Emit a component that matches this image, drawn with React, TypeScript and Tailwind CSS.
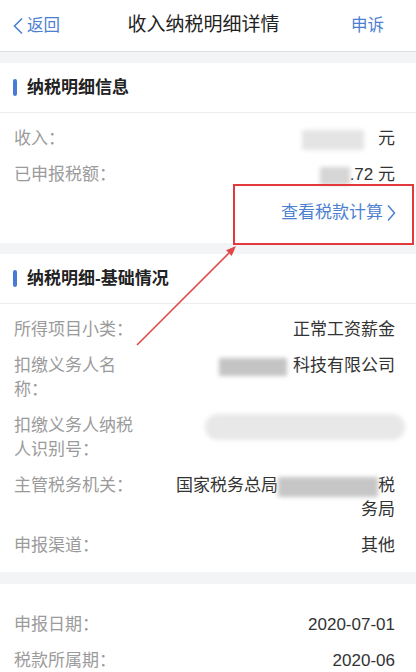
import React from 'react';

const FONT = { fontFamily: '"Liberation Sans", "Noto Sans CJK SC", sans-serif' };

type RowProps = { label: React.ReactNode; children: React.ReactNode };

const Row: React.FC<RowProps> = ({ label, children }) => (
  <div className="flex justify-between pl-[14px] pr-[21px] py-1.5 text-[17px] leading-6">
    <div className="w-[124px] shrink-0 text-[#9b9b9b]">{label}</div>
    <div className="flex-1 text-right text-[#333]">{children}</div>
  </div>
);

const SectionTitle: React.FC<{ title: string }> = ({ title }) => (
  <div className="flex h-[50px] items-center gap-[10px] border-b border-[#ececec] px-[13px]">
    <span className="h-[17px] w-[4px] rounded-full bg-[#4a7ad6]" />
    <span className="text-[17px] font-semibold text-[#222]">{title}</span>
  </div>
);

// blurred-out bits of the screenshot
const Blur: React.FC<{ className: string }> = ({ className }) => (
  <span className={`inline-block align-middle blur-[2px] ${className}`} />
);

const App: React.FC = () => {
  return (
    <div className="relative h-[672px] w-[416px] overflow-hidden bg-white" style={FONT}>
      {/* Header */}
      <header className="flex h-[52px] items-center justify-between border-b border-[#dcdde0] px-[12px]">
        <div className="flex items-center gap-[3px] text-[16.5px] text-[#4d7fd1]">
          <svg width="12" height="18" viewBox="0 0 12 18" fill="none">
            <path d="M10 1.5 L2.5 9 L10 16.5" stroke="#4d7fd1" strokeWidth="1.6" />
          </svg>
          <span>返回</span>
        </div>
        <h1 className="pr-[4px] text-[19px] text-[#222]">收入纳税明细详情</h1>
        <div className="pr-[20px] text-[16.5px] text-[#4d7fd1]">申诉</div>
      </header>
      <div className="h-[11px] bg-[#f3f4f6]" />

      {/* Section 1 */}
      <SectionTitle title="纳税明细信息" />
      <div className="pt-2 pb-2.5">
        <Row label="收入：">
          <Blur className="mr-[14px] h-[20px] w-[62px] bg-[#e4e4e4]" />元
        </Row>
        <Row label="已申报税额：">
          <Blur className="h-[18px] w-[30px] bg-[#d6d6d6]" />.72 元
        </Row>
        <div className="flex items-center justify-end gap-[3px] px-[20px] py-2 text-[17px] leading-6 text-[#4d7fd1]">
          <span>查看税款计算</span>
          <svg width="10" height="18" viewBox="0 0 10 18" fill="none">
            <path d="M2 1.5 L8.5 9 L2 16.5" stroke="#4d7fd1" strokeWidth="1.5" />
          </svg>
        </div>
      </div>
      <div className="h-[11px] bg-[#f3f4f6]" />

      {/* Section 2 */}
      <SectionTitle title="纳税明细-基础情况" />
      <div className="py-2">
        <Row label="所得项目小类：">正常工资薪金</Row>
        <Row label="扣缴义务人名称：">
          <Blur className="mr-[6px] h-[18px] w-[68px] bg-[#c4c4c4]" />科技有限公司
        </Row>
        <Row label="扣缴义务人纳税人识别号：">
          <span className="inline-block h-[26px] w-[200px] translate-x-[10px] rounded-full bg-[#e8e8e8] blur-[2px]" />
        </Row>
        <Row label="主管税务机关：">
          国家税务总局<Blur className="h-[20px] w-[100px] bg-[#c6c6c6]" />税
          <br />
          务局
        </Row>
        <Row label="申报渠道：">其他</Row>
      </div>
      <div className="h-3 bg-[#f3f4f6]" />

      {/* Section 3 */}
      <div className="pt-[23px]">
        <Row label="申报日期：">2020-07-01</Row>
        <Row label="税款所属期：">2020-06</Row>
      </div>

      {/* annotation overlay */}
      <div className="pointer-events-none absolute left-[233px] top-[184px] h-[61px] w-[181px] border-2 border-[#e23a3c]" />
      <svg className="pointer-events-none absolute left-0 top-0" width="416" height="672">
        <line x1="137" y1="345" x2="229" y2="253" stroke="#e04848" strokeWidth="1.6" />
        <polygon points="236,246 231.7,255.9 226.1,250.3" fill="#e04848" />
      </svg>
    </div>
  );
};

export default App;
